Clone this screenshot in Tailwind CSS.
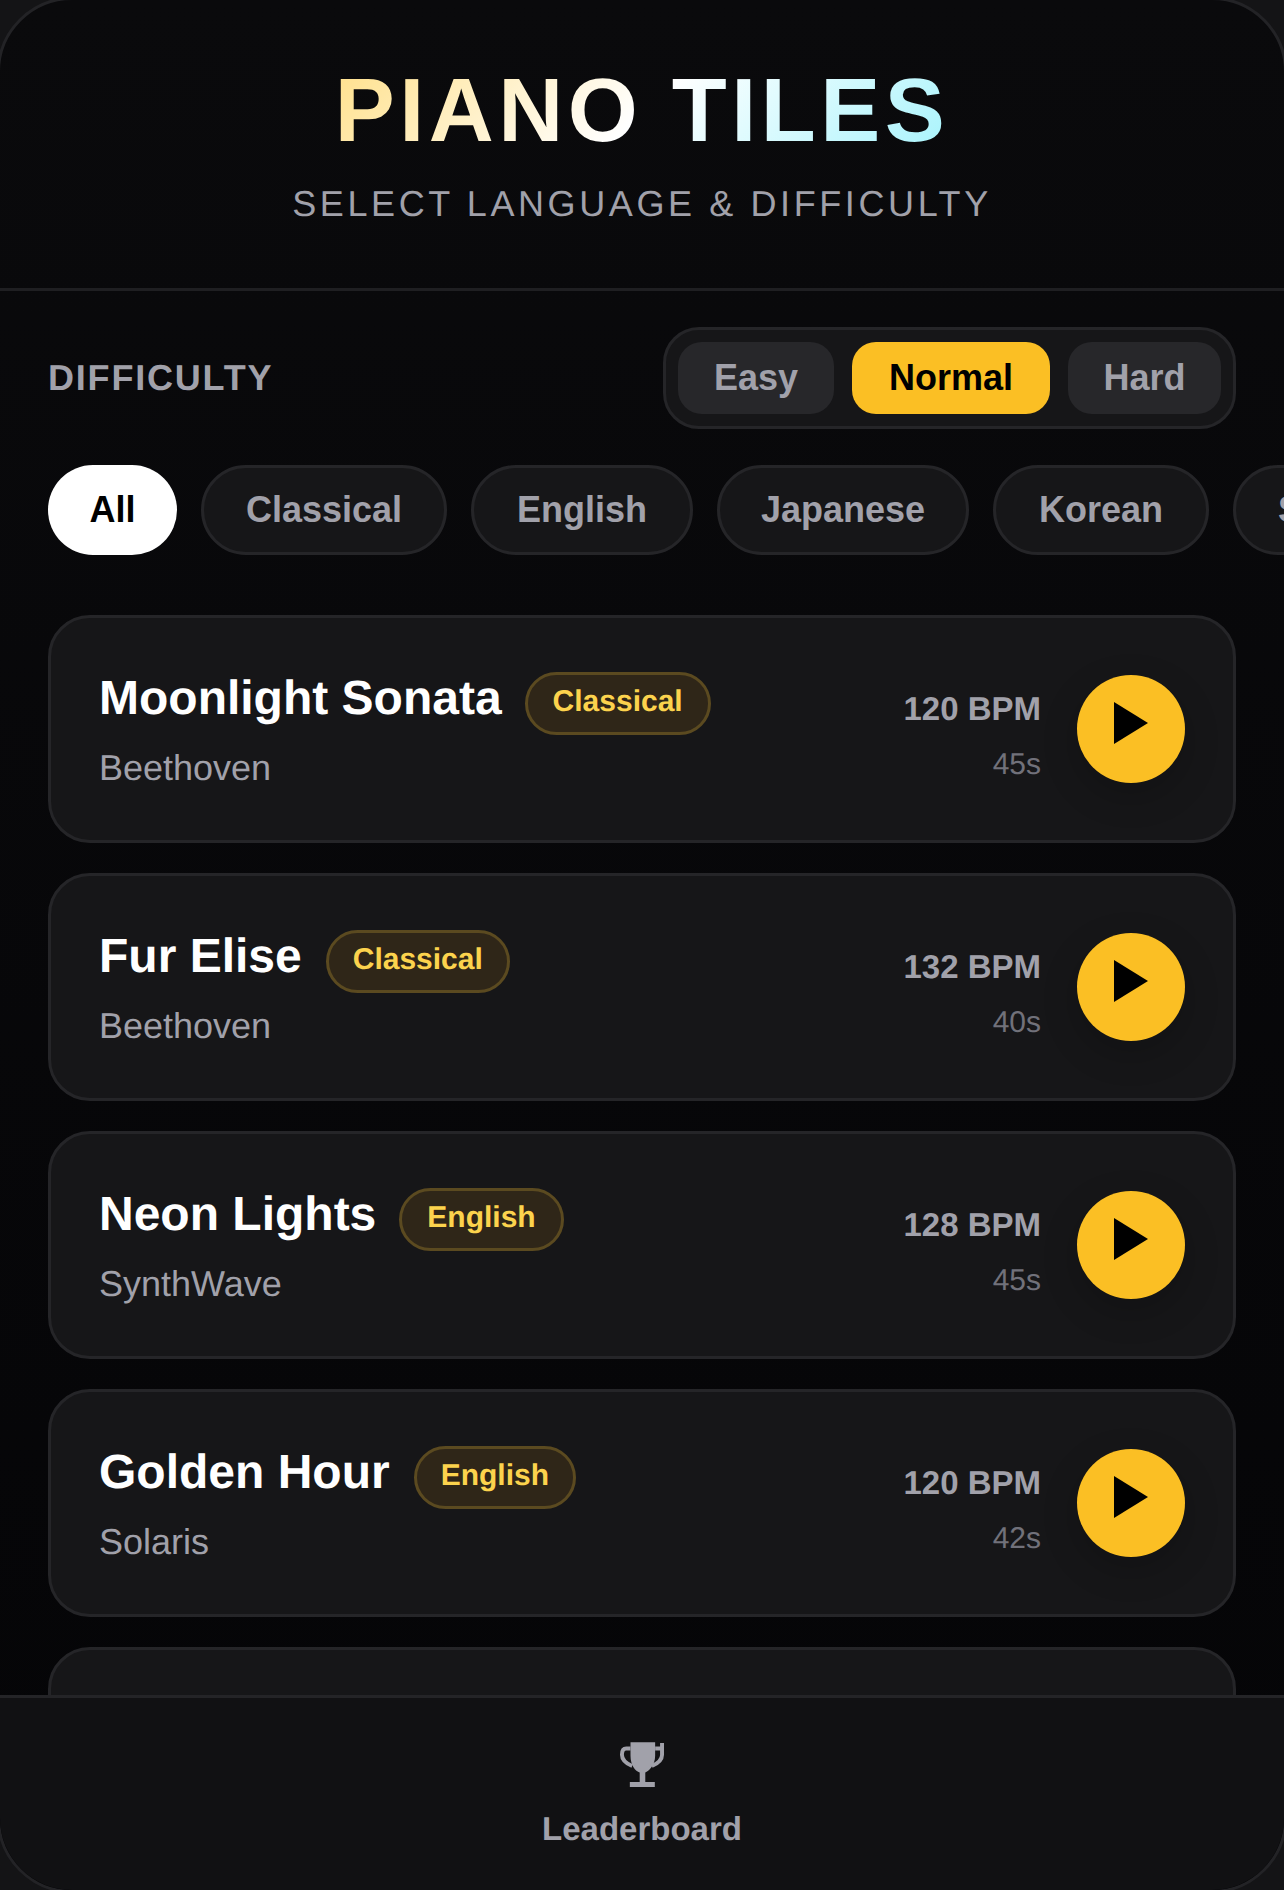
<!DOCTYPE html>
<html lang="en">
<head>
    <meta charset="UTF-8">
    <meta name="viewport" content="width=device-width, initial-scale=1.0">
    <title>Piano Tiles</title>
    <script src="https://cdn.jsdelivr.net/npm/@tailwindcss/browser@4"></script>
</head>
<body class="bg-[#141416] font-['Liberation_Sans',sans-serif] [text-rendering:geometricPrecision] h-[1890px] overflow-hidden">
    <!-- frame border sits just outside the window, only the corners show -->
    <div class="-m-[3px] w-[1290px] h-[1896px] flex flex-col overflow-hidden rounded-[75px] border-[3px] border-[#232326] bg-linear-to-b from-[#0a0a0c] to-[#050507]">

        <!-- Header -->
        <header class="h-[291px] shrink-0 border-b-[3px] border-[#1f1f22] flex flex-col items-center pt-[61px]">
            <h1 class="text-[90px] leading-[100px] font-bold tracking-[4.5px] bg-linear-[135deg,#ffe08a,#ffffff,#a5f3fc] bg-clip-text text-transparent">PIANO TILES</h1>
            <p class="mt-[18px] text-[36px] leading-[50px] tracking-[3.6px] text-[#a1a1aa]">SELECT LANGUAGE &amp; DIFFICULTY</p>
        </header>

        <!-- Difficulty -->
        <div class="px-[48px] pt-[36px] flex items-center justify-between shrink-0">
            <span class="text-[36px] font-bold tracking-[1.8px] text-[#a1a1aa]">DIFFICULTY</span>
            <div class="flex gap-[18px] p-[12px] bg-[#161618] border-[3px] border-[#252528] rounded-[36px]">
                <button class="h-[72px] w-[156px] rounded-[24px] bg-[#27272a] text-[#a1a1aa] text-[36px] font-bold">Easy</button>
                <button class="h-[72px] w-[198px] rounded-[24px] bg-[#fbbf24] text-black text-[36px] font-bold">Normal</button>
                <button class="h-[72px] w-[153px] rounded-[24px] bg-[#27272a] text-[#a1a1aa] text-[36px] font-bold">Hard</button>
            </div>
        </div>

        <!-- Language chips -->
        <div class="mt-[36px] pl-[48px] flex gap-[24px] overflow-hidden shrink-0">
            <button class="h-[90px] w-[129px] shrink-0 rounded-full bg-white text-black text-[36px] font-bold">All</button>
            <button class="h-[90px] w-[246px] shrink-0 rounded-full bg-[#161618] border-[3px] border-[#252528] text-[#a1a1aa] text-[36px] font-bold">Classical</button>
            <button class="h-[90px] w-[222px] shrink-0 rounded-full bg-[#161618] border-[3px] border-[#252528] text-[#a1a1aa] text-[36px] font-bold">English</button>
            <button class="h-[90px] w-[252px] shrink-0 rounded-full bg-[#161618] border-[3px] border-[#252528] text-[#a1a1aa] text-[36px] font-bold">Japanese</button>
            <button class="h-[90px] w-[216px] shrink-0 rounded-full bg-[#161618] border-[3px] border-[#252528] text-[#a1a1aa] text-[36px] font-bold">Korean</button>
            <button class="h-[90px] shrink-0 px-[42px] rounded-full bg-[#161618] border-[3px] border-[#252528] text-[#a1a1aa] text-[36px] font-bold">Spanish</button>
        </div>

        <!-- Song list -->
        <main class="mt-[60px] px-[48px] flex-1 min-h-0 overflow-hidden flex flex-col gap-[30px]">

            <div class="h-[228px] shrink-0 flex items-center rounded-[42px] bg-[#161618] border-[3px] border-[#252528] px-[48px]">
                <div class="self-start pt-[48px] flex-1">
                    <div class="flex items-start gap-[23px]">
                        <h2 class="text-[48px] leading-[65px] font-bold text-white">Moonlight Sonata</h2>
                        <span class="mt-[6px] h-[63px] flex items-center px-[25px] pb-[4px] rounded-full bg-[#2f2618] border-[3px] border-[#5b4a20] text-[#fcd34d] text-[30px] font-bold">Classical</span>
                    </div>
                    <p class="mt-[6px] text-[36px] leading-[54px] text-[#a1a1aa]">Beethoven</p>
                </div>
                <div class="self-start pt-[66px] text-right">
                    <p class="text-[33px] leading-[49px] font-bold text-[#a1a1aa]">120 BPM</p>
                    <p class="mt-[9px] text-[30px] leading-[45px] text-[#71717a]">45s</p>
                </div>
                <button class="ml-[36px] w-[108px] h-[108px] rounded-full bg-[#fbbf24] flex items-center justify-center shadow-[0_12px_36px_rgba(0,0,0,0.2)]">
                    <svg class="w-[34px] h-[42px] -mt-[12px]" viewBox="0 0 34 42"><path d="M0 0L34 21L0 42Z" fill="#000"/></svg>
                </button>
            </div>

            <div class="h-[228px] shrink-0 flex items-center rounded-[42px] bg-[#161618] border-[3px] border-[#252528] px-[48px]">
                <div class="self-start pt-[48px] flex-1">
                    <div class="flex items-start gap-[24px]">
                        <h2 class="text-[48px] leading-[65px] font-bold text-white">Fur Elise</h2>
                        <span class="mt-[6px] h-[63px] flex items-center px-[24px] pb-[4px] rounded-full bg-[#2f2618] border-[3px] border-[#5b4a20] text-[#fcd34d] text-[30px] font-bold">Classical</span>
                    </div>
                    <p class="mt-[6px] text-[36px] leading-[54px] text-[#a1a1aa]">Beethoven</p>
                </div>
                <div class="self-start pt-[66px] text-right">
                    <p class="text-[33px] leading-[49px] font-bold text-[#a1a1aa]">132 BPM</p>
                    <p class="mt-[9px] text-[30px] leading-[45px] text-[#71717a]">40s</p>
                </div>
                <button class="ml-[36px] w-[108px] h-[108px] rounded-full bg-[#fbbf24] flex items-center justify-center shadow-[0_12px_36px_rgba(0,0,0,0.2)]">
                    <svg class="w-[34px] h-[42px] -mt-[12px]" viewBox="0 0 34 42"><path d="M0 0L34 21L0 42Z" fill="#000"/></svg>
                </button>
            </div>

            <div class="h-[228px] shrink-0 flex items-center rounded-[42px] bg-[#161618] border-[3px] border-[#252528] px-[48px]">
                <div class="self-start pt-[48px] flex-1">
                    <div class="flex items-start gap-[23px]">
                        <h2 class="text-[48px] leading-[65px] font-bold text-white">Neon Lights</h2>
                        <span class="mt-[6px] h-[63px] flex items-center px-[25px] pb-[4px] rounded-full bg-[#2f2618] border-[3px] border-[#5b4a20] text-[#fcd34d] text-[30px] font-bold">English</span>
                    </div>
                    <p class="mt-[6px] text-[36px] leading-[54px] text-[#a1a1aa]">SynthWave</p>
                </div>
                <div class="self-start pt-[66px] text-right">
                    <p class="text-[33px] leading-[49px] font-bold text-[#a1a1aa]">128 BPM</p>
                    <p class="mt-[9px] text-[30px] leading-[45px] text-[#71717a]">45s</p>
                </div>
                <button class="ml-[36px] w-[108px] h-[108px] rounded-full bg-[#fbbf24] flex items-center justify-center shadow-[0_12px_36px_rgba(0,0,0,0.2)]">
                    <svg class="w-[34px] h-[42px] -mt-[12px]" viewBox="0 0 34 42"><path d="M0 0L34 21L0 42Z" fill="#000"/></svg>
                </button>
            </div>

            <div class="h-[228px] shrink-0 flex items-center rounded-[42px] bg-[#161618] border-[3px] border-[#252528] px-[48px]">
                <div class="self-start pt-[48px] flex-1">
                    <div class="flex items-start gap-[24px]">
                        <h2 class="text-[48px] leading-[65px] font-bold text-white">Golden Hour</h2>
                        <span class="mt-[6px] h-[63px] flex items-center px-[24px] pb-[4px] rounded-full bg-[#2f2618] border-[3px] border-[#5b4a20] text-[#fcd34d] text-[30px] font-bold">English</span>
                    </div>
                    <p class="mt-[6px] text-[36px] leading-[54px] text-[#a1a1aa]">Solaris</p>
                </div>
                <div class="self-start pt-[66px] text-right">
                    <p class="text-[33px] leading-[49px] font-bold text-[#a1a1aa]">120 BPM</p>
                    <p class="mt-[9px] text-[30px] leading-[45px] text-[#71717a]">42s</p>
                </div>
                <button class="ml-[36px] w-[108px] h-[108px] rounded-full bg-[#fbbf24] flex items-center justify-center shadow-[0_12px_36px_rgba(0,0,0,0.2)]">
                    <svg class="w-[34px] h-[42px] -mt-[12px]" viewBox="0 0 34 42"><path d="M0 0L34 21L0 42Z" fill="#000"/></svg>
                </button>
            </div>

            <!-- cut off by the footer -->
            <div class="h-[228px] shrink-0 rounded-[42px] bg-[#161618] border-[3px] border-[#252528]"></div>
        </main>

        <!-- Footer -->
        <footer class="h-[195px] shrink-0 border-t-[3px] border-[#242427] bg-[#111113] flex flex-col items-center pt-[43px]">
            <svg class="w-[46px] h-[47px]" viewBox="415 180 140 143" fill="#a1a1aa">
                <path d="M450 184H525V225C525 255 505 272 495 276V305H524V320H448V305H478V276C465 272 450 255 450 225Z"/>
                <path d="M450 203H437C426 203 424 212 424 222C424 240 440 250 455 256M525 203H545M546 186V222C546 240 530 250 515 256" fill="none" stroke="#a1a1aa" stroke-width="12"/>
            </svg>
            <span class="mt-[18px] text-[33px] leading-[45px] font-bold text-[#a1a1aa]">Leaderboard</span>
        </footer>
    </div>
</body>
</html>
